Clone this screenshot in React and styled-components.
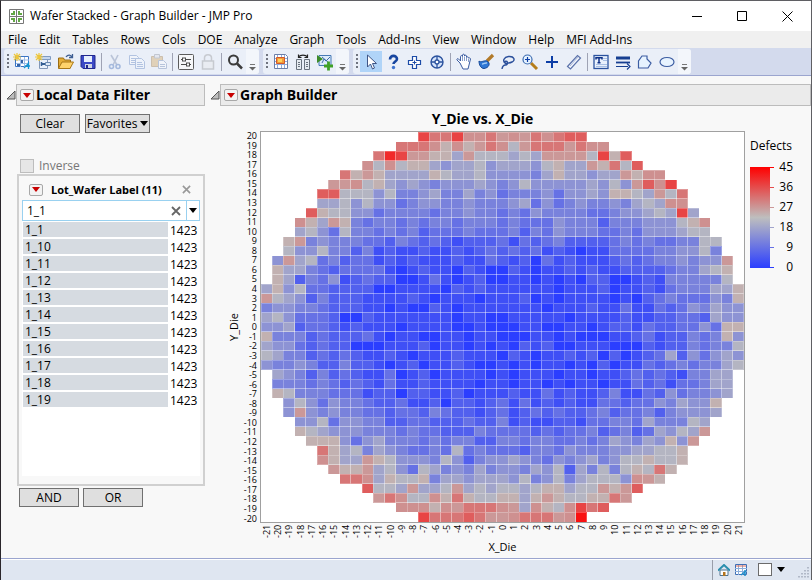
import React, { useState } from 'react';
import styled, { createGlobalStyle } from 'styled-components';

const GlobalStyle = createGlobalStyle`
* {
  box-sizing: border-box;
}
body {
  margin: 0;
  font-family: "Open Sans", "Noto Sans", sans-serif;
  font-size: 12px;
  line-height: 16px;
  color: #000;
  background: #f8f8f8;
}
button, input {
  font: inherit;
  color: inherit;
}
`;

const AppWindow = styled.div`
  min-height: 100vh;
  display: flex;
  flex-direction: column;
  background: #f8f8f8;
  border: 1px solid #5f5f63;
  border-left-color: #2a262b;
  border-bottom: 2px solid #2d2d33;
`;

const TitleBar = styled.header`
  display: flex;
  align-items: center;
  height: 30px;
  padding: 0 13px 0 8px;
  background: #fff;
`;

const AppTitle = styled.h1`
  flex: 1;
  margin: 0 0 0 6px;
  font-size: 12px;
  font-weight: 400;
`;

const WindowButtons = styled.div`
  display: flex;
  gap: 23px;
`;

const WindowButton = styled.button`
  display: flex;
  align-items: center;
  justify-content: center;
  width: 22px;
  height: 22px;
  padding: 0;
  border: 0;
  background: none;
`;

const MenuBar = styled.nav`
  display: flex;
  gap: 12px;
  height: 17px;
  padding: 0 7px;
  background: #f0f0f0;
`;

const MenuItem = styled.button`
  padding: 0;
  border: 0;
  background: none;
  line-height: 17px;
  white-space: nowrap;
`;

const ToolBar = styled.div`
  display: flex;
  gap: 4px;
  height: 28px;
  padding: 1px 3px;
  background: #d3daed;
  border-bottom: 1px solid #9ba5cf;
`;

const ToolGroup = styled.div`
  display: flex;
  align-items: center;
  height: 25px;
  background: #eaeff8;
  border-radius: 3px;
`;

const Grip = styled.span`
  width: 3px;
  height: 15px;
  margin: 0 1px 0 3px;
  background: repeating-linear-gradient(#70747f 0 2px, transparent 2px 4px);
  border-right: 1px solid #eaeff8;
`;

const ToolButton = styled.button`
  display: flex;
  align-items: center;
  justify-content: center;
  width: 22px;
  height: 21px;
  padding: 0;
  border: 0;
  background: ${(props) => (props.$active ? '#b0d4f8' : 'none')};
  &:disabled {
    opacity: 0.35;
  }
`;

const Separator = styled.span`
  width: 1px;
  height: 18px;
  margin: 0 2px;
  background: #9fa3b4;
`;

const OverflowButton = styled.button`
  display: flex;
  align-items: flex-end;
  justify-content: center;
  width: 13px;
  height: 25px;
  padding: 0 0 3px;
  border: 0;
  border-radius: 0 3px 3px 0;
  background: #f3f6fb;
`;

const Content = styled.main`
  flex: 1;
  display: flex;
  gap: 5px;
  padding: 8px 0 0 5px;
`;

const FilterColumn = styled.section`
  flex: none;
  width: 199px;
`;

const GraphColumn = styled.section`
  flex: 1;
  min-width: 0;
  display: flex;
  flex-direction: column;
`;

const OutlineRow = styled.div`
  display: flex;
  align-items: center;
`;

const OutlineBox = styled.div`
  flex: 1;
  display: flex;
  align-items: center;
  gap: 2px;
  height: 22px;
  padding-left: 3px;
  background: #ebebeb;
  border: 1px solid #bcbcbc;
`;

const OutlineTitle = styled.h2`
  margin: 0;
  font-size: 14px;
  line-height: 20px;
  font-weight: 700;
`;

const RedButton = styled.button`
  display: flex;
  align-items: center;
  justify-content: center;
  width: 14px;
  height: 12px;
  padding: 0;
  border: 1px solid #a8a8a8;
  border-radius: 2px;
  background: #f3f3f3;
`;

const BareButton = styled.button`
  display: flex;
  align-items: center;
  justify-content: center;
  padding: 0;
  border: 0;
  background: none;
`;

const ButtonRow = styled.div`
  display: flex;
  gap: 5px;
`;

const LogicRow = styled.div`
  display: flex;
  gap: 4px;
  padding-left: 13px;
`;

const PushButton = styled.button`
  display: flex;
  align-items: center;
  justify-content: center;
  gap: 3px;
  width: ${(props) => props.$width || 60}px;
  height: 19px;
  padding: 0;
  border: 1px solid #707070;
  background: #dfdfdf;
  white-space: nowrap;
`;

const FilterBody = styled.div`
  padding: 8px 0 0 14px;
`;

const InverseLabel = styled.label`
  display: flex;
  align-items: center;
  gap: 5px;
  margin-top: 25px;
  color: #777;
`;

const CheckBox = styled.input`
  appearance: none;
  width: 14px;
  height: 14px;
  margin: 0;
  border: 1px solid #bdbdbd;
  background: #e6e6e6;
`;

const FilterPanel = styled.div`
  margin: 0 0 2px 11px;
  padding: 3px 3px 8px;
  border: 2px solid #d0d0d0;
`;

const FilterHeader = styled.div`
  display: flex;
  align-items: center;
  gap: 8px;
  height: 21px;
  padding: 0 9px 0 7px;
`;

const FilterTitle = styled.h3`
  flex: 1;
  margin: 0;
  font-size: 11px;
  font-weight: 700;
  white-space: nowrap;
`;

const SearchBox = styled.div`
  display: flex;
  height: 21px;
  background: #fff;
  border: 1px solid #99d1f0;
`;

const SearchInput = styled.input`
  flex: 1;
  min-width: 0;
  padding: 0 4px;
  border: 0;
  outline: 0;
  background: none;
`;

const SearchDrop = styled(BareButton)`
  width: 13px;
  margin-left: 5px;
  border-left: 1px solid #99d1f0;
`;

const WaferList = styled.ul`
  min-height: 255px;
  margin: 0;
  padding: 1px;
  list-style: none;
  background: #fff;
`;

const WaferRow = styled.li`
  display: flex;
  gap: 2px;
  height: 17px;
`;

const WaferName = styled.button`
  flex: 1;
  height: 15px;
  padding: 0 2px;
  border: 0;
  background: #d6dbe1;
  line-height: 15px;
  text-align: left;
`;

const WaferCount = styled.span`
  width: 29px;
  line-height: 18px;
`;

const ChartTitle = styled.h3`
  margin: 3px 0 2px;
  padding-right: 56px;
  font-size: 14px;
  line-height: 20px;
  text-align: center;
`;

const ChartGrid = styled.div`
  flex: 1;
  display: grid;
  grid-template-columns: 16px 18px minmax(0, 1fr) 66px;
  grid-template-rows: minmax(392px, 1fr) 16px 17px;
  padding: 0 0 2px 16px;
`;

const YTitle = styled.div`
  align-self: center;
  writing-mode: vertical-rl;
  transform: rotate(180deg);
  font-size: 11px;
`;

const YTicks = styled.div`
  display: flex;
  flex-direction: column;
  padding-right: 3px;
  font-size: 9px;
  text-align: right;
`;

const YTick = styled.span`
  flex: 1;
  min-height: 0;
  line-height: 9px;
`;

const Plot = styled.div`
  background: #fff;
  border: 1px solid #a0a0a0;
`;

const Cells = styled.svg`
  display: block;
  width: 100%;
  height: 100%;
`;

const XTicks = styled.div`
  grid-column: 3;
  display: flex;
  padding: 2px 1px 0;
  font-size: 9px;
`;

const XTick = styled.span`
  flex: 1 1 0;
  min-width: 0;
  display: flex;
  justify-content: flex-end;
  writing-mode: vertical-rl;
  transform: rotate(180deg);
  line-height: 11px;
`;

const XTitle = styled.div`
  grid-column: 3;
  font-size: 11px;
  text-align: center;
`;

const Legend = styled.div`
  padding: 7px 0 0 5px;
`;

const LegendBody = styled.div`
  display: flex;
  margin-top: 3px;
`;

const Ramp = styled.div`
  width: 20px;
  height: 101px;
  margin-top: 10px;
  background: linear-gradient(#ff0000, #bebebe 50%, #2b3eff);
`;

const Scale = styled.ol`
  margin: 0;
  padding: 0;
  list-style: none;
`;

const ScaleItem = styled.li`
  display: flex;
  align-items: center;
  height: 20px;
  &::before {
    content: "";
    width: 4px;
    height: 1px;
    background: ${(props) => props.$color};
  }
`;

const ScaleText = styled.span`
  width: 19px;
  text-align: right;
`;

const StatusBar = styled.footer`
  display: flex;
  align-items: center;
  justify-content: flex-end;
  gap: 5px;
  height: 22px;
  padding-right: 1px;
  background: #dfe6f1;
  border-top: 1px solid #9ba5cf;
  box-shadow: inset 0 1px 0 #fff;
`;

const StatusDivider = styled.span`
  width: 1px;
  height: 20px;
  background: #9a9eaa;
`;

const StatusBox = styled.span`
  width: 14px;
  height: 13px;
  margin-left: 6px;
  border: 1px solid #6b6b6b;
  background: #fff;
`;

const SizeGrip = styled.svg`
  margin-left: 6px;
`;

const menus = ['File', 'Edit', 'Tables', 'Rows', 'Cols', 'DOE', 'Analyze', 'Graph', 'Tools',
  'Add-Ins', 'View', 'Window', 'Help', 'MFI Add-Ins'];

const wafers = ['1_1', '1_10', '1_11', '1_12', '1_13', '1_14', '1_15', '1_16', '1_17', '1_18', '1_19'];

// one string per Y_Die from 20 down to -20, one hex digit per die, three defects a step
const dieRows = [
  'dbbdaab9a9babcc',
  'bbba8a89ba79bbb9baa',
  'bed99886977767699997d8c',
  'a7a7886566756665786698b7c',
  'b89866668766755554686656698aa',
  '99a7865654555654575555565759cad',
  'cc777574456446453444535565887697b',
  '6675755345544544456353454454676aa',
  'c87755344443445443435444433455676d6',
  'a86984344343443444343335444244455578a',
  '6753744343423334333424354443343555677',
  '894544433243232122231323422223434334477',
  '755744241211211212323231210113333445574',
  '59673423312121112113212031211123234454559',
  '86643233331012110210021011212112222344678',
  '86243512322001310120011010102200121444447',
  '6857332222001111021211111101112011213444668',
  '9765242221111210111011120101111010234333548',
  '4554432221101002101111111011121131132354655',
  '6753332002111111101100111110111121122332655',
  '5562332121110111100100011001101221322335388',
  '8444232223101100110110001101000112312243485',
  '6553232200011120110101021200111000212243447',
  '7644232321121011121110210112120201236253565',
  '5445422422101201121001010110102011323434467',
  '65424232113012011110101110110112323214466',
  '44434323213112111101101101011011323133466',
  '87444333122022112011121131211241132534456',
  '575354432231120221231312121133233546558',
  '595454433233243221231232322342334245556',
  '5573554422332223224121122133443644476',
  '8765554443433222433332323342342365769',
  '88853564443434422443443343465465859',
  'b86746543343734333244354445566778',
  'a86698755547524556543545645778778',
  '98896753764546455465726474787b8',
  'bba68778466566657457467775a98',
  'c77696679676776788677989c',
  '9ba77a8b8778868987788b9',
  'aaa8a9bbba96a87adbc',
  'dbbbcb99abbb9af',
];

const COLS = 43;
const ROWS = 41;
const yValues = Array.from({ length: ROWS }, (_, i) => 20 - i);
const xValues = Array.from({ length: COLS }, (_, i) => i - 21);

function defectColor(defects) {
  const t = defects / 45;
  const low = [43, 62, 255];
  const mid = [190, 190, 190];
  const high = [255, 0, 0];
  const [from, to, k] = t < 0.5 ? [low, mid, t * 2] : [mid, high, t * 2 - 1];
  return `rgb(${from.map((v, i) => Math.round(v + (to[i] - v) * k)).join(',')})`;
}

function dieColor(digit) {
  const level = parseInt(digit, 16);
  return defectColor(level > 9 ? level * 3 - 2 : level * 3);
}

const scale = [45, 36, 27, 18, 9, 0];

function Icon({ children }) {
  return (
    <svg width="18" height="18" viewBox="0 0 18 18" fill="none" aria-hidden="true">
      {children}
    </svg>
  );
}

const Sparkle = () => (
  <path d="M4 0v8M0 4h8M1 1l6 6M7 1L1 7" stroke="#edc63c" strokeWidth="1.2" />
);

const icons = {
  newTable: (
    <Icon>
      <path d="M2.5 3.5h13v10h-13z" fill="#fff" stroke="#3a74c4" />
      <path d="M3 7h13M3 10.5h13M7.5 4v10M11.5 4v10" stroke="#9dbce6" />
      <path d="M8 7h2v3H8zM4 11h3v2H4z" fill="#3563a5" />
      <path d="M11 15l4-4M15.5 9v7M12 13h5" stroke="#1494d0" strokeWidth="1.3" />
      <Sparkle />
    </Icon>
  ),
  newScript: (
    <Icon>
      <path d="M4.5 5.5h8v10h-8z" fill="#e9f1fb" stroke="#8197b8" />
      <path d="M3.5 3.5h12v3h-11z" fill="#c4d6ee" stroke="#7f9bc2" />
      <path d="M7 11h9" stroke="#355f94" strokeWidth="2" />
      <path d="M6.5 9v4" stroke="#355f94" strokeWidth="1.5" />
      <path d="M10.5 9.5h5v3h-5z" fill="#dce8f6" stroke="#6888b1" />
      <Sparkle />
    </Icon>
  ),
  open: (
    <Icon>
      <path d="M1.5 15V5h5l1 2h6v8z" fill="#e6ae38" stroke="#9a6d14" />
      <path d="M1.5 15.5L5 9h11.5L13 15.5z" fill="#ffd36b" stroke="#a87717" />
      <path d="M9 4c2-3 5-2 6 0M15.5 1v3.5H12" stroke="#3e5e93" strokeWidth="1.3" />
    </Icon>
  ),
  save: (
    <Icon>
      <path d="M2 2.5h14v13H4l-2-2z" fill="#3b49c6" stroke="#20278c" />
      <path d="M5 3h8v6H5z" fill="#e6eefc" />
      <path d="M6 11h7v4H6z" fill="#cfd5e4" />
      <path d="M7 12h2v3H7z" fill="#20278c" />
    </Icon>
  ),
  cut: (
    <Icon>
      <path d="M5 2l6 10M12 2L7 12" stroke="#63779f" strokeWidth="1.6" />
      <circle cx="5.5" cy="13.5" r="2" stroke="#2557ae" strokeWidth="1.6" />
      <circle cx="12" cy="13.5" r="2" stroke="#2557ae" strokeWidth="1.6" />
    </Icon>
  ),
  copy: (
    <Icon>
      <path d="M1.5 2.5h7l2 2v7h-9z" fill="#fff" stroke="#4b74b8" />
      <path d="M3 5.5h5M3 7.5h4M3 9.5h4" stroke="#4b74b8" />
      <path d="M7.5 5.5h6l3 3v7h-9z" fill="#f3f8ff" stroke="#4b74b8" />
      <path d="M9 9.5h5M9 11.5h6M9 13.5h6" stroke="#4b74b8" />
    </Icon>
  ),
  paste: (
    <Icon>
      <path d="M1.5 3.5h11v10h-11z" fill="#cf9a47" stroke="#93692a" />
      <path d="M4.5 1.5h5V5h-5z" fill="#d9dbe0" stroke="#7b7f8a" />
      <path d="M8.5 7.5h5l3 3v5h-8z" fill="#fff" stroke="#5b76a8" />
      <path d="M10 11.5h5M10 13.5h5" stroke="#5b76a8" />
    </Icon>
  ),
  prefs: (
    <Icon>
      <rect x="1.5" y="1.5" width="15" height="15" rx="1" fill="#f6f7f9" stroke="#5b5b5b" />
      <path d="M4 6.5h10M4 11.5h10" stroke="#4c4c4c" strokeWidth="1.2" />
      <rect x="5.5" y="5" width="3" height="3" fill="#fff" stroke="#4c4c4c" />
      <rect x="9.5" y="10" width="3" height="3" fill="#fff" stroke="#4c4c4c" />
    </Icon>
  ),
  lock: (
    <Icon>
      <path d="M5.5 8V5c0-4.5 7-4.5 7 0v3" stroke="#888" strokeWidth="1.5" />
      <rect x="3.5" y="8" width="11" height="8" fill="#e8e8e8" stroke="#888" strokeWidth="1.5" />
    </Icon>
  ),
  search: (
    <Icon>
      <circle cx="7.5" cy="7" r="4.5" stroke="#3b3b3b" strokeWidth="2" />
      <path d="M11 10.5l5 5" stroke="#3b3b3b" strokeWidth="2.5" />
    </Icon>
  ),
  graph: (
    <Icon>
      <path d="M2.5 1.5h11l2 2v12h-13z" fill="#fff" stroke="#6c7ea8" />
      <path d="M3 5.5h12M3 8.5h12M3 11.5h12M5.5 2v13M9.5 2v13M12.5 2v13" stroke="#8fabdc" />
      <path d="M4.5 4.5h8v6h-8z" fill="#f49b38" stroke="#d2592b" />
      <path d="M6 6h4v3H6z" fill="#ffd35c" />
    </Icon>
  ),
  columns: (
    <Icon>
      <path d="M2.5 6.5h5v10h-5zM10.5 6.5h5v10h-5z" fill="#e6ebf1" stroke="#6a737e" />
      <path d="M4 9.5h2M4 11.5h2M4 13.5h2M12 9.5h2M12 11.5h2M12 13.5h2" stroke="#6a737e" />
      <path d="M4.5 4c2-2.5 7-2.5 9 0M4.5 1.5v3h3M13.5 1.5v3h-3" stroke="#222" strokeWidth="1.2" />
    </Icon>
  ),
  addGraph: (
    <Icon>
      <path d="M3 2.5h12v10H3z" fill="#dcebfb" stroke="#4579b5" />
      <path d="M6 10l2-4 2 2 4-4M6 4l7 6" stroke="#3c6ca7" />
      <path d="M1 2l6 4-6 4z" fill="#3d8b2b" />
      <path d="M12.5 8.5v9M8 13h9" stroke="#3fa127" strokeWidth="2.8" />
    </Icon>
  ),
  arrow: (
    <Icon>
      <path d="M5.5 2v12l3-3 2 5 2-1-2-4.5h4z" fill="#fff" stroke="#3f5687" strokeLinejoin="round" />
    </Icon>
  ),
  help: (
    <Icon>
      <path d="M6 6.5c0-5 7-4.5 7-.5 0 2.5-3.5 2.5-3.5 5" stroke="#17459f" strokeWidth="2.6" />
      <circle cx="9.5" cy="14.5" r="1.7" fill="#3f74cf" />
    </Icon>
  ),
  cross: (
    <Icon>
      <path d="M6.5 3.5h4v4h4v4h-4v4h-4v-4h-4v-4h4z" fill="#fff" stroke="#1d4ca8" strokeWidth="1.2" />
      <path d="M8.5 7.5v4M6.5 9.5h4" stroke="#1d4ca8" />
    </Icon>
  ),
  target: (
    <Icon>
      <circle cx="9" cy="9" r="6" fill="#d7e5fb" stroke="#2b539f" strokeWidth="1.4" />
      <circle cx="9" cy="9" r="2" fill="#fff" stroke="#2b539f" strokeWidth="1.3" />
      <path d="M9 3v4M9 11v4M3 9h4M11 9h4" stroke="#2b539f" strokeWidth="1.3" />
    </Icon>
  ),
  hand: (
    <Icon>
      <path d="M5 10L2 7c-.6-1.4 1-1.8 1.6-1L5.5 8V3.5c.3-1.3 1.7-1 2 0V2c.3-1.2 1.9-1 2 0v1c.4-1.2 1.9-1 2 0v1.5c.5-1 1.9-.8 2 .3 1 0 2 .2 2 1.2L14 12l-1 4H8z" fill="#fff" stroke="#3c5da2" />
      <path d="M7.5 4v4M9.5 3.5V8M11.5 4.5V8M13.5 5.5V9" stroke="#8aa0cb" />
    </Icon>
  ),
  brush: (
    <Icon>
      <path d="M10 8l6-6" stroke="#b27a2a" strokeWidth="3.2" />
      <path d="M2 8c2 2 5-1 8 0 4 2 2 7-3 7.5C4 15.5 2 12 2 8z" fill="#2f78d6" stroke="#154897" />
      <path d="M5 11c2 0 3-1.5 5-1" stroke="#a4ccf5" strokeWidth="1.5" />
    </Icon>
  ),
  lasso: (
    <Icon>
      <path d="M6.5 10.5C3 8 5 4 9.5 3.5c6-.5 7 4 3.500 5.500-2 1-4 1-6 1.500-2-1-1-3 1-2 1.500 1.500 0 3.500-1.500 3.500-2 0-3 1-3.500 4" stroke="#2b4f9b" strokeWidth="1.4" />
    </Icon>
  ),
  magnify: (
    <Icon>
      <path d="M10 10l6 6" stroke="#b57e1c" strokeWidth="3" />
      <circle cx="6.5" cy="6.5" r="4.5" fill="#e7f3ff" stroke="#3a6ab0" strokeWidth="1.2" />
      <path d="M4 6.5h5M6.5 4v5" stroke="#0c3da6" strokeWidth="1.2" />
    </Icon>
  ),
  plus: (
    <Icon>
      <path d="M9 3v12M3 9h12" stroke="#0c3da6" strokeWidth="2" />
    </Icon>
  ),
  ruler: (
    <Icon>
      <path d="M2.5 13.5l10-11 3 2.5-10 11z" fill="#f3f6fc" stroke="#5b72aa" strokeWidth="1.2" />
      <path d="M5 13l8-9" stroke="#a9b8da" />
    </Icon>
  ),
  text: (
    <Icon>
      <rect x="2" y="2.5" width="14" height="13" fill="#e9f1fc" stroke="#2b539f" strokeWidth="1.3" />
      <path d="M11 5.5h4M11 7.5h4M4 11.5h11M4 13.5h11" stroke="#a9c0e4" />
      <path d="M4 6.5V4.8h6v1.7M7 5v5M5.5 9.8h3" stroke="#0c2f86" strokeWidth="1.5" />
    </Icon>
  ),
  lines: (
    <Icon>
      <path d="M2 5h14" stroke="#173f91" strokeWidth="3" />
      <path d="M2 9.5h14" stroke="#173f91" strokeWidth="1.8" />
      <path d="M2 13.5h12M13 10.5l3 3-3 3" stroke="#173f91" strokeWidth="1.2" />
    </Icon>
  ),
  polygon: (
    <Icon>
      <path d="M6 3h5v3l4 4-3 5H2.5V8z" fill="#e7f3ff" stroke="#3c5da2" strokeWidth="1.2" />
    </Icon>
  ),
  ellipse: (
    <Icon>
      <ellipse cx="9" cy="9" rx="7" ry="4.5" fill="#e7f3ff" stroke="#3c5da2" strokeWidth="1.2" />
    </Icon>
  ),
};

// '|' draws a separator, a leading '-' marks a disabled tool
const toolGroups = [
  ['newTable', 'newScript', 'open', 'save', '|', '-cut', '-copy', '-paste', '|', 'prefs', '-lock', '|', 'search'],
  ['graph', 'columns', 'addGraph'],
  ['arrow', 'help', 'cross', 'target', '|', 'hand', 'brush', 'lasso', 'magnify', 'plus', 'ruler', '|',
    'text', 'lines', 'polygon', 'ellipse'],
];

function RedTriangle({ label }) {
  return (
    <RedButton aria-label={label}>
      <svg width="8" height="5" viewBox="0 0 8 5" aria-hidden="true">
        <path d="M0 0h8L4 5z" fill="#c80000" />
      </svg>
    </RedButton>
  );
}

function DownTriangle() {
  return (
    <svg width="8" height="5" viewBox="0 0 8 5" aria-hidden="true">
      <path d="M0 0h8L4 5z" fill="#000" />
    </svg>
  );
}

function CloseMark({ size, color }) {
  return (
    <svg width={size} height={size} viewBox="0 0 10 10" aria-hidden="true">
      <path d="M1 1l8 8M9 1L1 9" stroke={color} strokeWidth="1.8" />
    </svg>
  );
}

function Outline({ title }) {
  return (
    <OutlineRow>
      <BareButton aria-label={`Collapse ${title}`}>
        <svg width="10" height="10" viewBox="0 0 10 10" aria-hidden="true">
          <path d="M9 1v8H1z" fill="#bdbdbd" stroke="#555" />
        </svg>
      </BareButton>
      <OutlineBox>
        <RedTriangle label={`${title} options`} />
        <OutlineTitle>{title}</OutlineTitle>
      </OutlineBox>
    </OutlineRow>
  );
}

function Tools() {
  const [active, setActive] = useState('arrow');
  return (
    <ToolBar>
      {toolGroups.map((group, g) => (
        <ToolGroup key={g}>
          <Grip />
          {group.map((entry, i) => {
            if (entry === '|') return <Separator key={i} />;
            const name = entry.replace('-', '');
            return (
              <ToolButton
                key={i}
                aria-label={name}
                disabled={entry[0] === '-'}
                $active={name === active}
                onClick={() => g === 2 && setActive(name)}
              >
                {icons[name]}
              </ToolButton>
            );
          })}
          <OverflowButton aria-label="More tools">
            <svg width="7" height="7" viewBox="0 0 7 7" aria-hidden="true">
              <path d="M1 .5h5" stroke="#777" />
              <path d="M0 3h7L3.5 6.5z" fill="#666" />
            </svg>
          </OverflowButton>
        </ToolGroup>
      ))}
    </ToolBar>
  );
}

function DataFilter() {
  const [query, setQuery] = useState('1_1');
  return (
    <FilterColumn>
      <Outline title="Local Data Filter" />
      <FilterBody>
        <ButtonRow>
          <PushButton>Clear</PushButton>
          <PushButton $width={65}>Favorites <DownTriangle /></PushButton>
        </ButtonRow>
        <InverseLabel>
          <CheckBox type="checkbox" disabled />
          Inverse
        </InverseLabel>
      </FilterBody>
      <FilterPanel>
        <FilterHeader>
          <RedTriangle label="Column options" />
          <FilterTitle>Lot_Wafer Label (11)</FilterTitle>
          <BareButton aria-label="Remove column"><CloseMark size={9} color="#999" /></BareButton>
        </FilterHeader>
        <SearchBox>
          <SearchInput
            aria-label="Search values"
            value={query}
            onChange={(e) => setQuery(e.target.value)}
          />
          <BareButton aria-label="Clear search" onClick={() => setQuery('')}>
            <CloseMark size={10} color="#666" />
          </BareButton>
          <SearchDrop aria-label="Search options"><DownTriangle /></SearchDrop>
        </SearchBox>
        <WaferList>
          {wafers.filter((w) => w.includes(query)).map((w) => (
            <WaferRow key={w}>
              <WaferName>{w}</WaferName>
              <WaferCount>1423</WaferCount>
            </WaferRow>
          ))}
        </WaferList>
      </FilterPanel>
      <LogicRow>
        <PushButton>AND</PushButton>
        <PushButton>OR</PushButton>
      </LogicRow>
    </FilterColumn>
  );
}

function WaferMap() {
  return (
    <Cells role="img" aria-label="Defects by die">
      {dieRows.map((row, r) => {
        const start = (COLS - row.length) / 2;
        return row.split('').map((digit, i) => (
          <rect
            key={`${r}-${i}`}
            x={`${((start + i) / COLS) * 100}%`}
            y={`${(r / ROWS) * 100}%`}
            width={`${100 / COLS}%`}
            height={`${100 / ROWS}%`}
            fill={dieColor(digit)}
            stroke="#fff"
            strokeOpacity="0.25"
            shapeRendering="crispEdges"
          />
        ));
      })}
    </Cells>
  );
}

function GraphBuilder() {
  return (
    <GraphColumn>
      <Outline title="Graph Builder" />
      <ChartTitle>Y_Die vs. X_Die</ChartTitle>
      <ChartGrid>
        <YTitle>Y_Die</YTitle>
        <YTicks>
          {yValues.map((v) => <YTick key={v}>{v}</YTick>)}
        </YTicks>
        <Plot><WaferMap /></Plot>
        <Legend>
          Defects
          <LegendBody>
            <Ramp />
            <Scale>
              {scale.map((v) => (
                <ScaleItem key={v} $color={defectColor(v)}>
                  <ScaleText>{v}</ScaleText>
                </ScaleItem>
              ))}
            </Scale>
          </LegendBody>
        </Legend>
        <XTicks>
          {xValues.map((v) => <XTick key={v}>{v}</XTick>)}
        </XTicks>
        <XTitle>X_Die</XTitle>
      </ChartGrid>
    </GraphColumn>
  );
}

export default function App() {
  return (
    <AppWindow>
      <GlobalStyle />
      <TitleBar>
        <svg width="15" height="15" viewBox="0 0 15 15" aria-hidden="true">
          <path d="M.5.5h14v14H.5zM7.5 0v15M0 7.5h15" fill="#fff" stroke="#777" />
          <path d="M2 6V4h2V2h2v4zM9 6V2h2v2h2v2zM2 9h4v4H4v-2H2zM9 13V9h4v2h-2v2z" fill="#62a744" />
        </svg>
        <AppTitle>Wafer Stacked - Graph Builder - JMP Pro</AppTitle>
        <WindowButtons>
          <WindowButton aria-label="Minimize">
            <svg width="11" height="11" viewBox="0 0 11 11"><path d="M0 5.5h10" stroke="#000" /></svg>
          </WindowButton>
          <WindowButton aria-label="Maximize">
            <svg width="11" height="11" viewBox="0 0 11 11"><path d="M.5.5h9v9h-9z" fill="none" stroke="#000" /></svg>
          </WindowButton>
          <WindowButton aria-label="Close">
            <svg width="11" height="11" viewBox="0 0 11 11"><path d="M.5.5l10 10M10.5.5l-10 10" stroke="#000" /></svg>
          </WindowButton>
        </WindowButtons>
      </TitleBar>
      <MenuBar>
        {menus.map((m) => <MenuItem key={m}>{m}</MenuItem>)}
      </MenuBar>
      <Tools />
      <Content>
        <DataFilter />
        <GraphBuilder />
      </Content>
      <StatusBar>
        <StatusDivider />
        <svg width="12" height="12" viewBox="0 0 12 12" aria-hidden="true">
          <path d="M2 6h8v5.5H2z" fill="#fff" stroke="#4d7390" />
          <path d="M0 6.5L6 1l6 5.5" fill="none" stroke="#2b8fae" strokeWidth="2" />
          <path d="M5 8h2.5v4H5z" fill="#b4741e" />
        </svg>
        <svg width="12" height="12" viewBox="0 0 12 12" aria-hidden="true">
          <path d="M.5.5h11v10H.5z" fill="#fff" stroke="#3f6fb5" />
          <path d="M0 4.5h12M0 7.5h12M3.5 1v10M7.5 1v10" stroke="#8caedb" />
          <path d="M1 2h10" stroke="#d86a5a" />
          <path d="M6 11l5-4M10 6v6" stroke="#1b8cc8" strokeWidth="1.5" />
        </svg>
        <StatusBox />
        <DownTriangle />
        <SizeGrip width="14" height="18" viewBox="0 0 14 18" aria-hidden="true">
          <path d="M12 6v12M9 9v9M6 12v6M3 15v3" stroke="#a3abba" strokeWidth="1.5" strokeDasharray="1.5 1.5" />
        </SizeGrip>
      </StatusBar>
    </AppWindow>
  );
}
